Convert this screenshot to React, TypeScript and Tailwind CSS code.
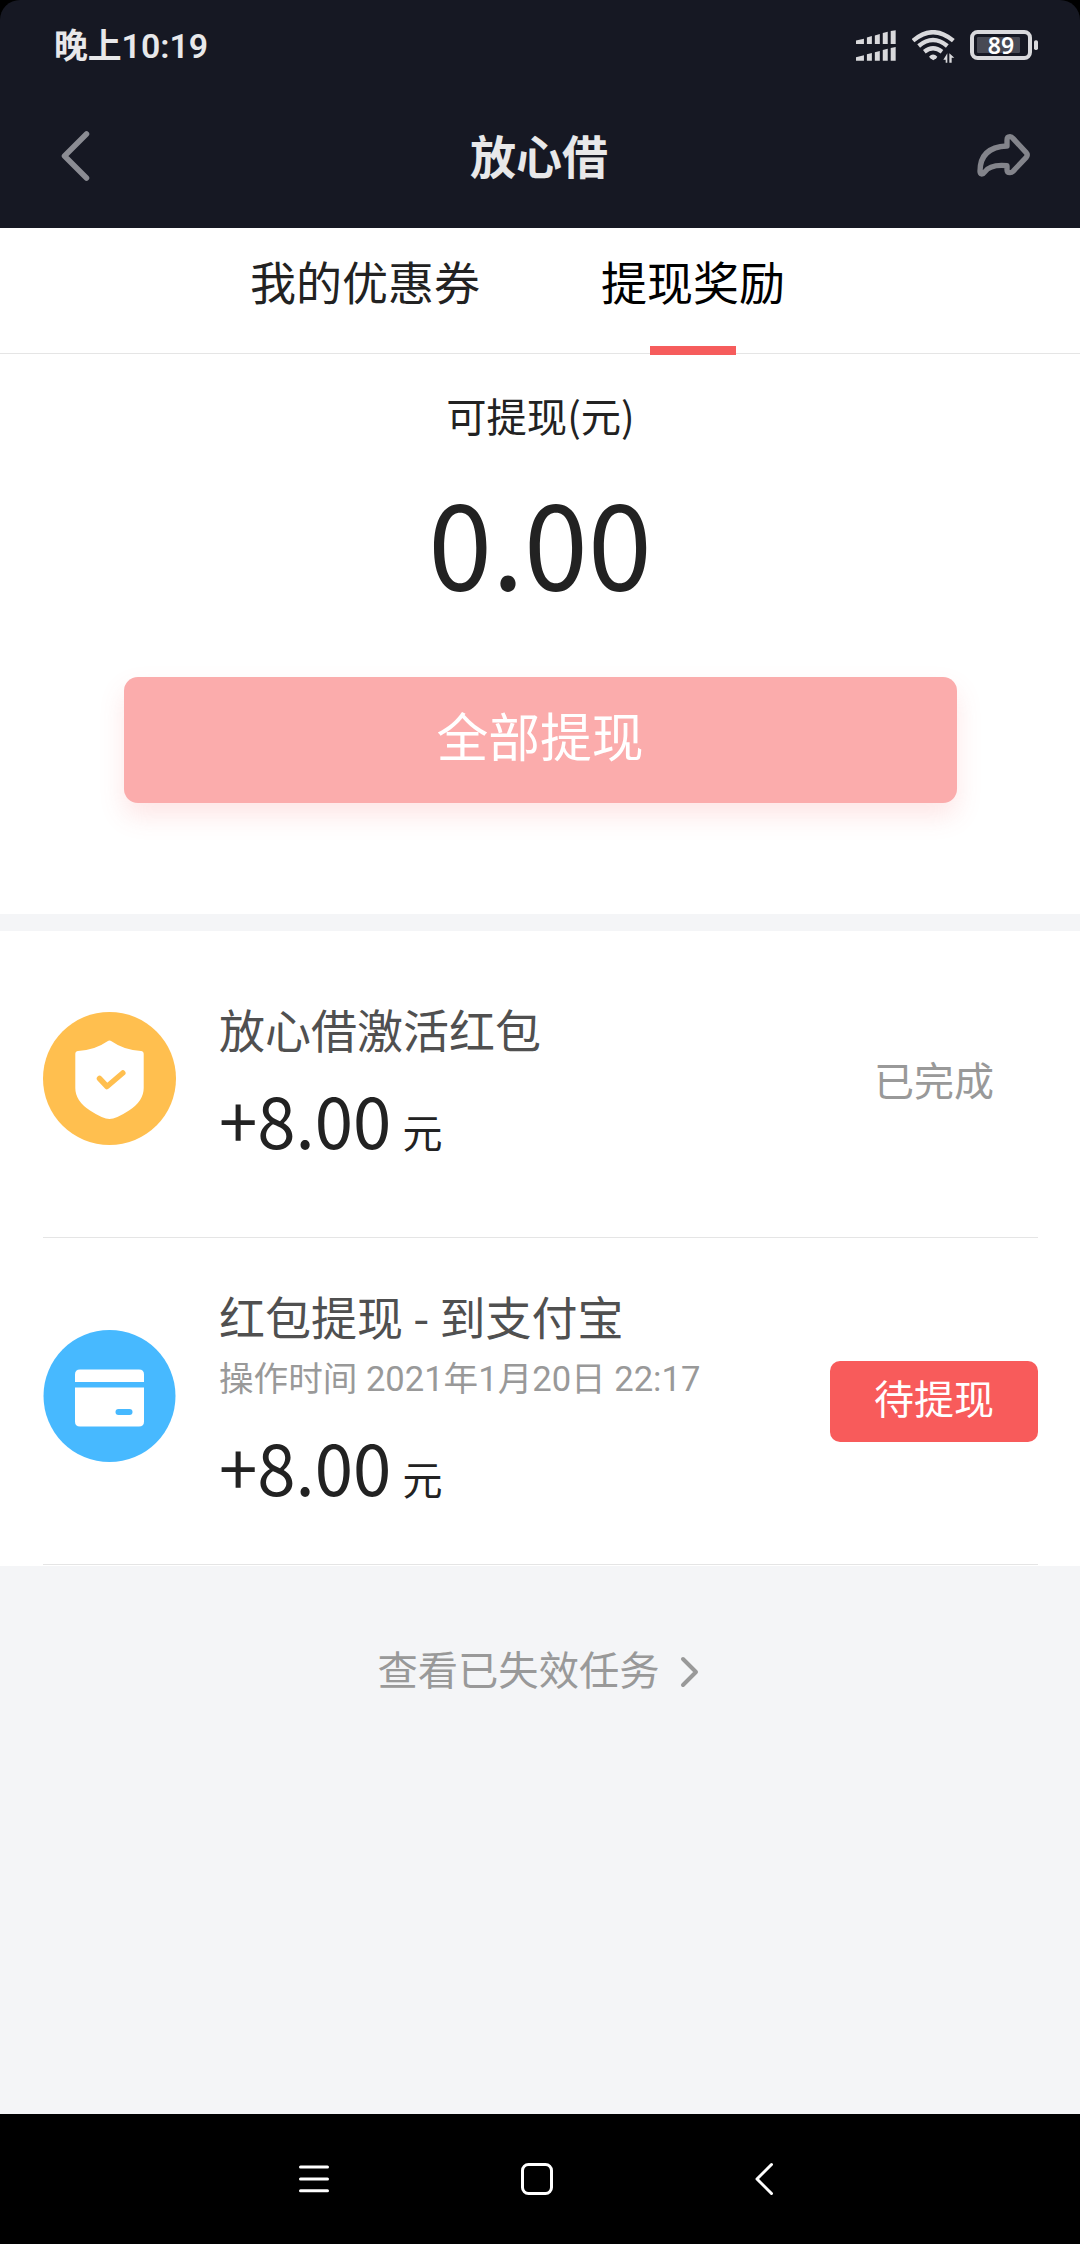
import React, { ReactNode } from 'react';

/* ─────────────────────── ICONS ─────────────────────── */
const SignalIcon = () => (
  <svg className="w-[40px] h-[31px]" viewBox="108 90 121 93" fill="#d9d9dc">
    <path d="M108 121l24-5v16h-24zM141 112l15-4v24h-15zM165 106l15-4v30h-15zM189 99l15-4v37h-15zM213 93l15-3v42h-15z" />
    <path d="M108 172l24-6v17h-24zM141 163l15-4v24h-15zM165 157l15-4v30h-15zM189 150l15-4v37h-15zM213 144l15-3v42h-15z" />
  </svg>
);

const WifiIcon = () => (
  <svg className="w-[43px] h-[33px]" viewBox="276 90 129 99" fill="none" stroke="#d9d9dc">
    <path d="M279 122q60-51 121 0M296 138q43-36 86 0M313 155q26-20 53 0" strokeWidth="13" />
    <path d="M327 170q12-13 25 0l-3 5-9 6-9-6z" fill="#d9d9dc" stroke="none" />
    <path d="M382 160v28h-5v-9h-7zM388 188v-28l15 13h-8v15z" fill="#d9d9dc" stroke="none" />
  </svg>
);

const BatteryIcon = ({ level }: { level: number }) => (
  <div className="relative w-[68px] h-[30px]">
    <svg className="w-full h-full" viewBox="450 90 204 90">
      <rect x="456" y="96" width="174" height="78" rx="17" fill="none" stroke="#d9d9dc" strokeWidth="12" />
      <rect x="471" y="111" width="129" height="48" rx="4" fill="#484a54" />
      <rect x="642" y="121" width="12" height="29" rx="5" fill="#d9d9dc" />
    </svg>
    <span className="absolute inset-0 w-[62px] text-center font-['Noto_Sans',sans-serif] font-semibold text-[23px] leading-[31px] text-white">
      {level}
    </span>
  </div>
);

const ShareIcon = () => (
  <svg className="w-[54px] h-[44px]" viewBox="470 402 162 132" fill="none" stroke="#83848b" strokeWidth="16" strokeLinejoin="round">
    <path d="M560 438v-17q0-11 9-11 5 0 9 5l39 42q7 8 0 16l-39 41q-4 4-9 4-9 0-9-9v-12q-50-5-67 19-4 6-9 6-5-1-5-8 0-72 80-76z" />
  </svg>
);

const ShieldIcon = () => (
  <svg className="w-[133px] h-[133px]" viewBox="0 0 133 133">
    <circle cx="66.5" cy="66.5" r="66.5" fill="#ffbf4f" />
    <path
      d="M64.500 29.200Q66.500 27.800 68.500 29.200Q81 38 98 39Q100.700 39.300 100.700 42V76Q100.700 89 86 98.500Q73 107 66.500 107Q60 107 47 98.500Q32.300 89 32.300 76V42Q32.300 39.300 35 39Q52 38 64.500 29.200z"
      fill="#fff"
    />
    <path d="M56.500 66.500L64 74.500 79.800 61" fill="none" stroke="#ffbf4f" strokeWidth="5.500" strokeLinecap="round" strokeLinejoin="round" />
  </svg>
);

const CardIcon = () => (
  <svg className="w-[133px] h-[132px]" viewBox="0 0 133 132">
    <circle cx="66.5" cy="66" r="66" fill="#47b9ff" />
    <path d="M32 52V44.500q0-5 5-5h59q5 0 5 5V52z" fill="#fff" />
    <path d="M32 57.500h69v34q0 5-5 5H37q-5 0-5-5z" fill="#fff" />
    <rect x="72.500" y="79" width="17" height="6" rx="3" fill="#47b9ff" />
  </svg>
);

/* ─────────────────────── HEADER ─────────────────────── */
const StatusBar = () => (
  <div className="h-[90px] flex items-start justify-between pl-[54px] pr-[42px] pt-[30px]">
    <p className="mt-px text-[33.800px] leading-[32px] font-semibold text-[#e8e8ea] font-['Roboto','Noto_Sans_CJK_SC',sans-serif]">
      晚上10:19
    </p>
    <div className="flex">
      <SignalIcon />
      <div className="ml-4">
        <WifiIcon />
      </div>
      <div className="ml-[15px]">
        <BatteryIcon level={89} />
      </div>
    </div>
  </div>
);

const TitleBar = () => (
  <div className="h-[138px] flex items-start justify-between pl-[61px] pr-[49px] pt-[41px]">
    <svg className="w-[40px] h-[50px]" viewBox="0 0 40 50" fill="none" stroke="#8b8c93" strokeWidth="5.500" strokeLinecap="round" strokeLinejoin="round">
      <path d="M25.500 3L3.500 25l22 22" />
    </svg>
    <h1 className="text-[46px] leading-[46px] font-bold text-[#e8e8e9]">放心借</h1>
    <div className="pt-[3px]">
      <ShareIcon />
    </div>
  </div>
);

const Tabs = () => (
  <nav className="h-[126px] flex items-start gap-[121px] pl-[250px] pt-[29px] border-b border-[#e5e5e5] text-[46px] leading-[46px]">
    <button className="text-[#222]">我的优惠券</button>
    <button className="relative text-black">
      提现奖励
      <span className="absolute left-[49px] top-[89px] w-[86px] h-[9px] bg-[#f65c5c]" />
    </button>
  </nav>
);

/* ─────────────────────── BALANCE ─────────────────────── */
const Balance = () => (
  <section className="h-[560px] flex flex-col items-center pt-[41px] text-[#222]">
    <p className="pl-px text-[40.300px] leading-[40px]">可提现(元)</p>
    <p className="mt-[47px] text-[115px] leading-[115px] scale-y-[1.03]">0.00</p>
    <button className="mt-[80px] w-[833px] h-[126px] pb-[11px] rounded-[14px] bg-[#fbacac] text-[51.800px] leading-[52px] text-white shadow-[0_13px_26px_rgba(248,89,89,0.15)]">
      全部提现
    </button>
  </section>
);

/* ─────────────────────── REWARD ROWS ─────────────────────── */
interface RewardRowProps {
  icon:      ReactNode;
  title:     string;
  time?:     string;
  amount:    string;
  action:    ReactNode;
  className: string;
}

const RewardRow: React.FC<RewardRowProps> = ({ icon, title, time, amount, action, className }) => (
  <div className={`ml-[43px] mr-[42px] flex items-start border-b border-[#e5e5e5] ${className}`}>
    <div>{icon}</div>
    <div className="ml-[43px] flex-1">
      <p className="text-[46px] leading-[46px] text-[#505050]">{title}</p>
      {time && (
        <p className="mt-[24px] pb-[2px] text-[34.600px] leading-[34px] text-[#999] font-['Roboto','Noto_Sans_CJK_SC',sans-serif]">
          {time}
        </p>
      )}
      <p className="mt-8 flex items-baseline gap-[11px] text-[#222] text-[69px] leading-[70px]">
        <span className="scale-y-[1.04]">{amount}</span>
        <span className="text-[40px] leading-[40px]">元</span>
      </p>
    </div>
    {action}
  </div>
);

/* ─────────────────────── BOTTOM NAVIGATION ─────────────────────── */
const SystemNav = () => (
  <div className="h-[130px] bg-black flex items-start pl-[298px] pt-[48px]">
    <svg className="w-[32px] h-[34px]" viewBox="0 0 32 34" stroke="#fff" strokeWidth="3" strokeLinecap="round">
      <path d="M2.500 5h27M2.500 17h27M2.500 28.800h27" />
    </svg>
    <svg className="w-[34px] h-[34px] ml-[190px]" viewBox="0 0 34 34" fill="none" stroke="#fff" strokeWidth="3">
      <rect x="2.500" y="2.500" width="29" height="29" rx="6" />
    </svg>
    <svg className="w-[22px] h-[34px] ml-[199px]" viewBox="0 0 22 34" fill="none" stroke="#fff" strokeWidth="3" strokeLinecap="round" strokeLinejoin="round">
      <path d="M18.500 2.500L4 17l14.500 14.500" />
    </svg>
  </div>
);

export default function App() {
  return (
    <div className="w-[1080px] h-[2244px] flex flex-col bg-black font-['Noto_Sans_CJK_SC',sans-serif]">
      <header className="bg-[#161823] rounded-t-[20px]">
        <StatusBar />
        <TitleBar />
      </header>

      <main className="flex-1 bg-[#f4f5f7]">
        <div className="bg-white">
          <Tabs />
          <Balance />
        </div>

        <div className="mt-[17px] bg-white pb-px">
          <RewardRow
            className="h-[307px] pt-[74px] [&>div:first-child]:mt-[7px]"
            icon={<ShieldIcon />}
            title="放心借激活红包"
            amount="+8.00"
            action={
              <p className="mt-[54px] mr-[44px] text-[40px] leading-[40px] text-[#999]">已完成</p>
            }
          />
          <RewardRow
            className="h-[327px] pt-[54px] [&>div:first-child]:mt-[38px]"
            icon={<CardIcon />}
            title="红包提现 - 到支付宝"
            time="操作时间 2021年1月20日 22:17"
            amount="+8.00"
            action={
              <button className="mt-[69px] w-[208px] h-[81px] pb-[9px] rounded-[10px] bg-[#f85b5b] text-[40px] leading-[40px] text-white">
                待提现
              </button>
            }
          />
        </div>

        <button className="mx-auto mt-[82px] flex items-start pr-[3px] text-[40.300px] leading-[40px] text-[#999]">
          查看已失效任务
          <svg className="w-[20px] h-[32px] mt-[8px] ml-[20px]" viewBox="0 0 20 32" fill="none" stroke="#999" strokeWidth="4" strokeLinecap="round" strokeLinejoin="round">
            <path d="M3 3L16 16 3 29" />
          </svg>
        </button>
      </main>

      <SystemNav />
    </div>
  );
}
